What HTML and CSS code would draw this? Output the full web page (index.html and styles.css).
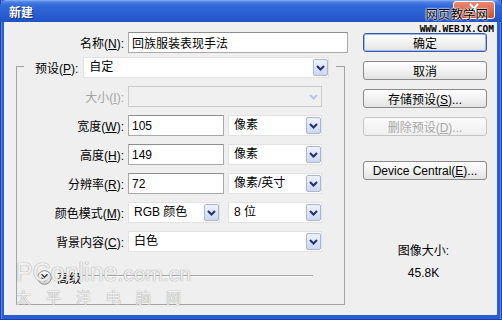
FILE: index.html
```html
<!DOCTYPE html>
<html lang="zh-CN">
<head>
    <meta charset="UTF-8">
    <title>新建</title>
    <link rel="stylesheet" href="styles.css">
</head>
<body>
    <div class="window">
        <div class="titlebar">
            <span class="title">新建</span>
            <span class="close-btn"><svg width="12" height="11" viewBox="0 0 12 11"><path d="M2 1 L10 10 M10 1 L2 10" stroke="#fff" stroke-width="2"/></svg></span>
        </div>
        <div class="dialog-body">
            <div class="form">
                <div class="name-row">
                    <label class="lbl">名称(<u>N</u>):</label>
                    <input class="text name-input" type="text" value="回族服装表现手法">
                </div>
                <fieldset class="group">
                    <legend>
                        <div class="preset">
                            <label class="preset-lbl">预设(<u>P</u>):</label>
                            <div class="combo preset-combo"><span class="combo-text">自定</span><span class="drop"><svg width="15" height="17" viewBox="0 0 15 17"><path d="M4 7 L7.5 10.5 L11 7" fill="none" stroke="#22306e" stroke-width="2"/></svg></span></div>
                        </div>
                    </legend>
                    <div class="rows">
                        <label class="lbl disabled">大小(<u>I</u>):</label>
                        <div class="ctrls">
                            <div class="combo full disabled-combo"><span class="combo-text"></span><span class="drop off"><svg width="15" height="17" viewBox="0 0 15 17"><path d="M4 7 L7.5 10.5 L11 7" fill="none" stroke="#b4c6ea" stroke-width="2"/></svg></span></div>
                        </div>

                        <label class="lbl">宽度(<u>W</u>):</label>
                        <div class="ctrls">
                            <input class="text num" type="text" value="105">
                            <div class="combo unit"><span class="combo-text">像素</span><span class="drop"><svg width="15" height="17" viewBox="0 0 15 17"><path d="M4 7 L7.5 10.5 L11 7" fill="none" stroke="#22306e" stroke-width="2"/></svg></span></div>
                        </div>

                        <label class="lbl">高度(<u>H</u>):</label>
                        <div class="ctrls">
                            <input class="text num" type="text" value="149">
                            <div class="combo unit"><span class="combo-text">像素</span><span class="drop"><svg width="15" height="17" viewBox="0 0 15 17"><path d="M4 7 L7.5 10.5 L11 7" fill="none" stroke="#22306e" stroke-width="2"/></svg></span></div>
                        </div>

                        <label class="lbl">分辨率(<u>R</u>):</label>
                        <div class="ctrls">
                            <input class="text num" type="text" value="72">
                            <div class="combo unit"><span class="combo-text">像素/英寸</span><span class="drop"><svg width="15" height="17" viewBox="0 0 15 17"><path d="M4 7 L7.5 10.5 L11 7" fill="none" stroke="#22306e" stroke-width="2"/></svg></span></div>
                        </div>

                        <label class="lbl">颜色模式(<u>M</u>):</label>
                        <div class="ctrls wide-gap">
                            <div class="combo mode"><span class="combo-text">RGB 颜色</span><span class="drop"><svg width="15" height="17" viewBox="0 0 15 17"><path d="M4 7 L7.5 10.5 L11 7" fill="none" stroke="#22306e" stroke-width="2"/></svg></span></div>
                            <div class="combo unit"><span class="combo-text">8 位</span><span class="drop"><svg width="15" height="17" viewBox="0 0 15 17"><path d="M4 7 L7.5 10.5 L11 7" fill="none" stroke="#22306e" stroke-width="2"/></svg></span></div>
                        </div>

                        <label class="lbl">背景内容(<u>C</u>):</label>
                        <div class="ctrls">
                            <div class="combo full"><span class="combo-text">白色</span><span class="drop"><svg width="15" height="17" viewBox="0 0 15 17"><path d="M4 7 L7.5 10.5 L11 7" fill="none" stroke="#22306e" stroke-width="2"/></svg></span></div>
                        </div>
                    </div>
                    <div class="advanced">
                        <svg class="adv-icon" width="15" height="15" viewBox="0 0 15 15">
                            <defs>
                                <linearGradient id="advg" x1="0" y1="0" x2="0" y2="1">
                                    <stop offset="0" stop-color="#ffffff"/>
                                    <stop offset="1" stop-color="#d4d4d4"/>
                                </linearGradient>
                            </defs>
                            <circle cx="7.5" cy="7.5" r="6.8" fill="url(#advg)" stroke="#8a8a8a"/>
                            <path d="M4.5 4.2 L7.5 7 L10.5 4.2 M4.5 7.7 L7.5 10.5 L10.5 7.7" fill="none" stroke="#333" stroke-width="1.4"/>
                        </svg>
                        <span class="adv-text">高级</span>
                        <span class="rule"></span>
                    </div>
                </fieldset>
            </div>
            <div class="side">
                <button class="btn default">确定</button>
                <button class="btn">取消</button>
                <button class="btn">存储预设(<u>S</u>)...</button>
                <button class="btn" disabled>删除预设(<u>D</u>)...</button>
                <button class="btn device">Device Central(<u>E</u>)...</button>
                <div class="info-label">图像大小:</div>
                <div class="info-value">45.8K</div>
            </div>
        </div>

        <div class="mark-top">
            <div class="mark-cn">网页教学网</div>
            <div class="mark-url">WWW.WEBJX.COM</div>
        </div>
        <div class="mark-bottom">
            <div class="mark-logo">PConline<span class="mark-dom">.com.cn</span></div>
            <div class="mark-name">太平洋电脑网</div>
        </div>
    </div>
</body>
</html>
```

FILE: styles.css
```css
* {
    box-sizing: border-box;
}
body {
    margin: 0;
    font-family: "Liberation Sans", "Noto Sans CJK SC", sans-serif;
    font-size: 12px;
    color: #000;
}
.window {
    position: relative;
    width: 502px;
    height: 320px;
    display: flex;
    flex-direction: column;
    padding: 0 5px 5px 4px;
    background: #2a5cd3;
    box-shadow: inset 1px 0 0 #1a3fa8, inset -1px 0 0 #1a3fa8, inset 0 -1px 0 #1a3fa8, inset 2px 0 0 #5b8ae6, inset -2px 0 0 #5b8ae6;
    overflow: hidden;
}
.titlebar {
    height: 22px;
    margin: 0 -5px 0 -4px;
    padding-left: 9px;
    display: flex;
    align-items: center;
    justify-content: space-between;
    background: linear-gradient(#8ab2f4 0, #4b7fe2 2px, #3169da 6px, #2a5fd2 14px, #2152c4 22px);
    border-radius: 6px 6px 0 0;
}
.title {
    color: #fff;
    font-weight: bold;
    font-size: 12px;
    text-shadow: 1px 1px 0 #12307e;
}
.close-btn {
    width: 42px;
    height: 18px;
    margin-right: 7px;
    margin-top: -3px;
    padding-top: 1px;
    border: 1px solid #fff;
    border-radius: 3px;
    background: linear-gradient(#e98a70, #cf4b2c);
    display: flex;
    justify-content: center;
    align-items: flex-start;
}
.dialog-body {
    flex: 1;
    display: flex;
    background: #efefef;
    padding-top: 10px;
}
.form {
    width: 344px;
}
.lbl {
    text-align: right;
    white-space: nowrap;
}
.lbl.disabled {
    color: #a4a4a4;
}
.name-row {
    display: flex;
    align-items: center;
    gap: 4px;
}
.name-row .lbl {
    width: 120px;
}
.text {
    height: 21px;
    margin: 0;
    padding: 0 3px;
    border: 1px solid #a9a9a9;
    border-top-color: #8e8e8e;
    background: #fff;
    font: inherit;
    color: #000;
    outline: none;
}
.name-input {
    width: 220px;
}
.num {
    width: 96px;
}
.group {
    width: 329px;
    margin: 2px 0 0 12px;
    padding: 0 0 18px 0;
    border: 1px solid #a3a3a3;
    min-inline-size: 0;
}
.group legend {
    margin-left: 7px;
    padding: 2px 7px 0 11px;
}
.preset {
    display: flex;
    align-items: center;
    gap: 5px;
}
.combo {
    height: 21px;
    display: flex;
    align-items: flex-start;
    background: #fff;
    border: 1px solid #e2e2e2;
}
.combo-text {
    flex: 1;
    padding-left: 5px;
    line-height: 19px;
    white-space: nowrap;
    overflow: hidden;
}
.drop {
    width: 15px;
    height: 17px;
    margin: 1px 0 0 0;
    display: flex;
    background: linear-gradient(#eef2fb, #cdd7ef);
    border: 1px solid #aab6d6;
    border-radius: 2px;
}
.drop svg {
    margin: -1px;
}
.drop.off {
    background: none;
    border-color: transparent;
}
.preset-combo {
    width: 246px;
}
.rows {
    display: grid;
    grid-template-columns: 107px auto;
    column-gap: 4px;
    row-gap: 8px;
    margin-top: 8px;
    align-items: center;
}
.ctrls {
    display: flex;
    gap: 4px;
}
.ctrls.wide-gap {
    gap: 8px;
}
.full {
    width: 194px;
}
.disabled-combo {
    background: #f0f0f0;
    border-color: #cacaca;
}
.unit {
    width: 94px;
}
.mode {
    width: 92px;
}
.advanced {
    display: flex;
    align-items: center;
    margin: 17px 0 0 20px;
}
.adv-text {
    margin-left: 5px;
}
.rule {
    width: 231px;
    margin: -4px 0 0 1px;
    border-top: 1px solid #a5a5a5;
    border-bottom: 1px solid #fff;
}
.side {
    width: 124px;
    margin: 1px 0 0 15px;
    display: flex;
    flex-direction: column;
}
.btn {
    height: 19px;
    margin: 0 0 9px 0;
    padding: 0;
    font: inherit;
    color: #000;
    background: linear-gradient(#ffffff, #f2f2f2 50%, #e2e2e2);
    border: 1px solid #8a8a8a;
    border-radius: 3px;
}
.btn.default {
    border-color: #3b5aa8;
    box-shadow: inset 0 0 0 1px #9bbaf0;
}
.btn:disabled {
    color: #a8a8a8;
    border-color: #c4c4c4;
    background: linear-gradient(#fbfbfb, #efefef);
}
.btn.device {
    margin-top: 16px;
}
.info-label {
    margin-top: 54px;
    text-align: center;
    line-height: 16px;
    padding-right: 3px;
}
.info-value {
    margin-top: 6px;
    text-align: center;
    line-height: 16px;
    padding-right: 3px;
}
.mark-top {
    position: absolute;
    top: 7px;
    right: 8px;
    text-align: right;
}
.mark-cn {
    font-family: "Noto Sans CJK SC", sans-serif;
    font-size: 12.5px;
    line-height: 14px;
    color: #000;
    padding-right: 6px;
    text-shadow: 0 0 2px #fff, 0 0 2px #fff, 0 0 1px #fff;
}
.mark-url {
    margin-top: 3px;
    font-family: "DejaVu Sans Mono", monospace;
    font-weight: bold;
    font-size: 9.5px;
    line-height: 9px;
    color: #000;
}
.mark-bottom {
    position: absolute;
    left: 16px;
    top: 258px;
    color: rgba(255, 255, 255, 0.85);
    text-shadow: 0 0 1px #9a9a9a, 0 0 1px #b0b0b0;
    pointer-events: none;
}
.mark-logo {
    font-family: "Liberation Sans", sans-serif;
    font-size: 25px;
    line-height: 28px;
}
.mark-dom {
    font-size: 21px;
}
.mark-name {
    font-family: "Noto Sans CJK SC", sans-serif;
    font-size: 15px;
    line-height: 17px;
    letter-spacing: 15px;
}
```
